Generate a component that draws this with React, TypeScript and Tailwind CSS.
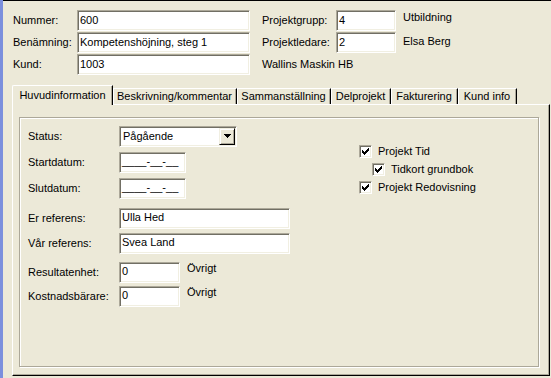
import React from 'react';

// sunken Win-classic edit box
function Field({ value, className = '' }: { value?: string; className?: string }) {
    return (
        <div className={`h-[21px] bg-white border border-t-[#aca899] border-l-[#aca899] border-b-white border-r-white shadow-[inset_1px_1px_0_#716f64,inset_-1px_-1px_0_#f1efe2] flex items-center pl-[2px] pb-[1px] whitespace-nowrap overflow-hidden ${className}`}>
            {value}
        </div>
    );
}

function Check() {
    // classic 7x7 tick, drawn pixel by pixel
    const cols = [2, 3, 4, 3, 2, 1, 0];
    return (
        <div className="w-[13px] h-[13px] shrink-0 bg-white border border-t-[#aca899] border-l-[#aca899] border-b-white border-r-white shadow-[inset_1px_1px_0_#716f64,inset_-1px_-1px_0_#f1efe2] flex items-center justify-center">
            <svg width="7" height="7" viewBox="0 0 7 7" shapeRendering="crispEdges">
                {cols.map((y, x) => (
                    <rect key={x} x={x} y={y} width="1" height="3" fill="#000" />
                ))}
            </svg>
        </div>
    );
}

function CheckRow({ label, indent = false }: { label: string; indent?: boolean }) {
    return (
        <div className={`h-[18px] flex items-center gap-[6px] ${indent ? 'ml-[13px]' : ''}`}>
            <Check />
            <span>{label}</span>
        </div>
    );
}

const tabs = [
    { label: 'Beskrivning/kommentar', w: 'w-[124px]' },
    { label: 'Sammanställning', w: 'w-[94px]' },
    { label: 'Delprojekt', w: 'w-[60px]' },
    { label: 'Fakturering', w: 'w-[67px]' },
    { label: 'Kund info', w: 'w-[59px]' },
];

export default function App() {
    return (
        <div className="w-[551px] h-[378px] flex bg-[#ece9d8] overflow-hidden font-['Liberation_Sans',Arial,sans-serif] text-[11px] leading-[13px] text-black">
            <div className="w-[3px] h-full bg-[#7b8fdd] shrink-0" />
            <div className="flex-1 flex flex-col border-t border-black">
                {/* header fields */}
                <div className="pl-[10px] pt-[9px] flex flex-col gap-[1px]">
                    <div className="flex items-center h-[21px]">
                        <span className="w-[64px]">Nummer:</span>
                        <Field value="600" className="w-[173px]" />
                        <span className="w-[74px] ml-[12px]">Projektgrupp:</span>
                        <Field value="4" className="w-[60px]" />
                        <span className="ml-[7px] self-start pt-[1px]">Utbildning</span>
                    </div>
                    <div className="flex items-center h-[21px]">
                        <span className="w-[64px]">Benämning:</span>
                        <Field value="Kompetenshöjning, steg 1" className="w-[173px]" />
                        <span className="w-[74px] ml-[12px]">Projektledare:</span>
                        <Field value="2" className="w-[60px]" />
                        <span className="ml-[7px] self-start pt-[3px]">Elsa Berg</span>
                    </div>
                    <div className="flex items-center h-[21px]">
                        <span className="w-[64px]">Kund:</span>
                        <Field value="1003" className="w-[173px]" />
                        <span className="ml-[12px] self-start pt-[4px]">Wallins Maskin HB</span>
                    </div>
                </div>

                {/* tab strip */}
                <div className="ml-[9px] mt-[10px] h-[19px] flex items-end">
                    <div className="relative z-10 w-[101px] h-[20px] -mb-[1px] bg-[#ece9d8] border-l border-t border-white rounded-tl-[2px] border-r border-r-black shadow-[inset_-1px_0_0_#aca899] flex items-center justify-center pb-[1px]">
                        Huvudinformation
                    </div>
                    {tabs.map(t => (
                        <div key={t.label} className={`${t.w} h-[16px] border-t border-white border-r border-r-black shadow-[inset_-1px_0_0_#aca899,inset_1px_0_0_#fff] flex items-center justify-center`}>
                            {t.label}
                        </div>
                    ))}
                </div>

                {/* tab panel */}
                <div className="ml-[9px] w-[538px] h-[272px] border-l border-t border-white border-r border-b border-r-black border-b-black shadow-[inset_-1px_-1px_0_#aca899]">
                    <div className="ml-[6px] mt-[12px] w-[520px] h-[250px] border border-[#aca899] shadow-[1px_1px_0_#fff,inset_1px_1px_0_#fff] flex">
                        <div className="w-[339px] pl-[8px] flex flex-col">
                            <div className="flex items-center h-[20px] mt-[8px]">
                                <span className="w-[91px]">Status:</span>
                                <div className="w-[118px] h-[21px] bg-white border border-t-[#aca899] border-l-[#aca899] border-b-white border-r-white shadow-[inset_1px_1px_0_#716f64,inset_-1px_-1px_0_#f1efe2] flex items-stretch p-[1px]">
                                    <span className="flex-1 pl-[2px] flex items-center">Pågående</span>
                                    <div className="w-[16px] bg-[#ece9d8] border border-t-[#f1efe2] border-l-[#f1efe2] border-b-[#000] border-r-[#000] shadow-[inset_1px_1px_0_#fff,inset_-1px_-1px_0_#aca899] flex items-center justify-center">
                                        <svg width="7" height="4" viewBox="0 0 7 4" shapeRendering="crispEdges">
                                            <path d="M0 0h7v1H0zM1 1h5v1H1zM2 2h3v1H2zM3 3h1v1H3z" fill="#000" />
                                        </svg>
                                    </div>
                                </div>
                            </div>
                            <div className="flex items-center h-[20px] mt-[6px]">
                                <span className="w-[91px]">Startdatum:</span>
                                <Field value="____-__-__" className="w-[67px] h-[20px]" />
                            </div>
                            <div className="flex items-center h-[20px] mt-[6px]">
                                <span className="w-[91px]">Slutdatum:</span>
                                <Field value="____-__-__" className="w-[67px] h-[20px]" />
                            </div>
                            <div className="flex items-center h-[20px] mt-[10px]">
                                <span className="w-[91px]">Er referens:</span>
                                <Field value="Ulla Hed" className="w-[171px] h-[20px]" />
                            </div>
                            <div className="flex items-center h-[20px] mt-[5px]">
                                <span className="w-[91px]">Vår referens:</span>
                                <Field value="Svea Land" className="w-[171px] h-[20px]" />
                            </div>
                            <div className="flex items-center h-[20px] mt-[9px]">
                                <span className="w-[91px]">Resultatenhet:</span>
                                <Field value="0" className="w-[61px] h-[20px]" />
                                <span className="ml-[7px] self-start">Övrigt</span>
                            </div>
                            <div className="flex items-center h-[20px] mt-[4px]">
                                <span className="w-[91px]">Kostnadsbärare:</span>
                                <Field value="0" className="w-[61px] h-[20px]" />
                                <span className="ml-[7px] self-start">Övrigt</span>
                            </div>
                        </div>
                        <div className="flex flex-col mt-[24px]">
                            <CheckRow label="Projekt Tid" />
                            <CheckRow label="Tidkort grundbok" indent />
                            <CheckRow label="Projekt Redovisning" />
                        </div>
                    </div>
                </div>
            </div>
        </div>
    );
}
